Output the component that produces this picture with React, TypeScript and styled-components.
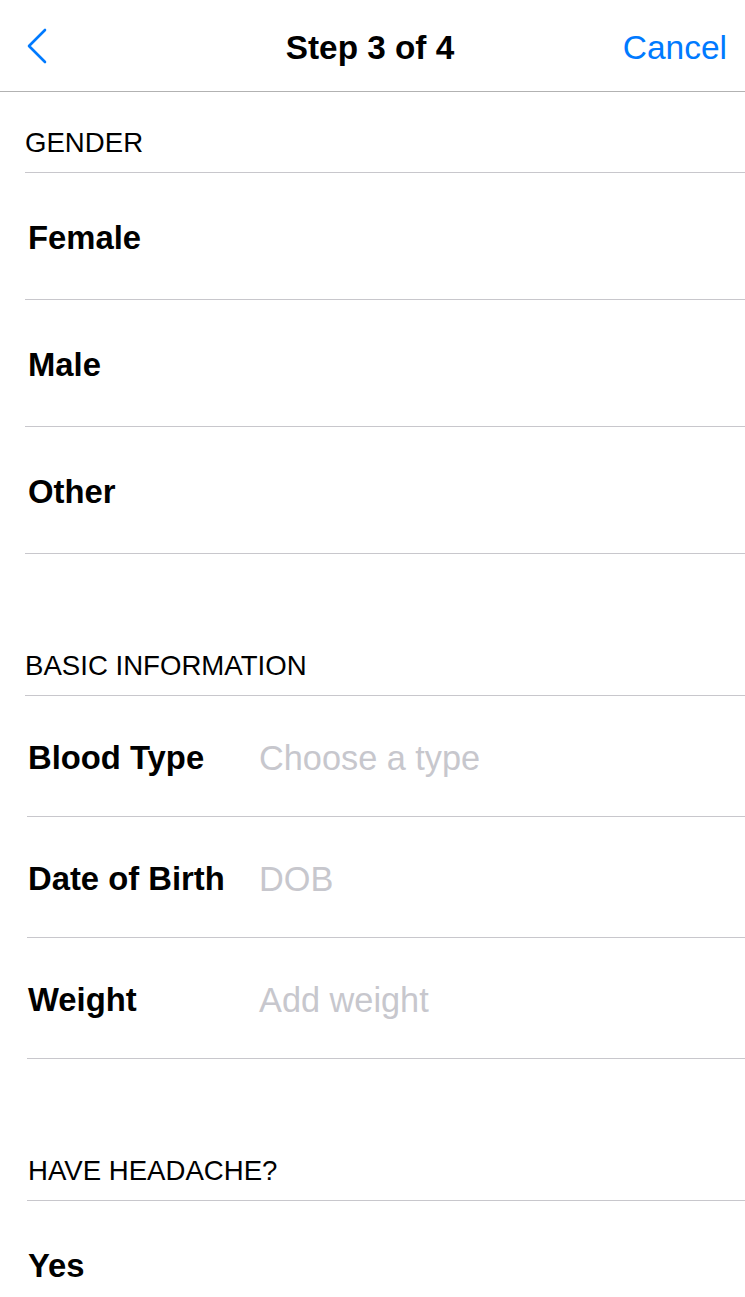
import styled, { createGlobalStyle } from 'styled-components'

const GlobalStyle = createGlobalStyle`
  html, body {
    margin: 0;
    padding: 0;
    background: #ffffff;
  }
  body {
    font-family: 'Liberation Sans', Arial, Helvetica, sans-serif;
    color: #000000;
    -webkit-font-smoothing: antialiased;
  }
`

const Root = styled.div`
  width: 745px;
  height: 1297px;
  overflow: hidden;
  background: #ffffff;
`

const NavBar = styled.div`
  height: 91px;
  display: grid;
  grid-template-columns: 140px 1fr 140px;
  align-items: center;
  border-bottom: 1px solid #b2b2b2;
  box-sizing: content-box;
`

const BackButton = styled.button`
  display: flex;
  align-items: center;
  justify-self: start;
  margin-left: 26px;
  margin-top: 2px;
  padding: 0;
  border: none;
  background: none;
  cursor: pointer;
`

const Title = styled.div`
  text-align: center;
  padding: 5px 5px 0 0;
  font-size: 33.3px;
  font-weight: 700;
`

const CancelButton = styled.button`
  justify-self: end;
  margin-right: 18px;
  padding: 4px 0 0;
  border: none;
  background: none;
  font-family: inherit;
  font-size: 33.5px;
  color: #007aff;
  cursor: pointer;
`

const Section = styled.section<{ $first?: boolean }>`
  margin-top: ${({ $first }) => ($first ? '0' : '61px')};
`

const SectionHeader = styled.div<{ $inset: number }>`
  height: 80px;
  box-sizing: border-box;
  padding: 35px 0 0 ${({ $inset }) => $inset}px;
  font-size: 27.6px;
  line-height: 32px;
  text-transform: uppercase;
  color: #000000;
`

const Row = styled.div<{ $height: number; $inset: number }>`
  height: ${({ $height }) => $height}px;
  box-sizing: border-box;
  display: flex;
  align-items: center;
  padding: 4px 0 0 28px;
  position: relative;
  border-top: 1px solid transparent;

  &::before {
    content: '';
    position: absolute;
    top: -1px;
    left: ${({ $inset }) => $inset}px;
    right: 0;
    height: 1px;
    background: #c8c7cc;
  }
`

const SectionEnd = styled.div<{ $inset: number }>`
  height: 1px;
  margin-left: ${({ $inset }) => $inset}px;
  background: #c8c7cc;
`

const Label = styled.div<{ $width?: number }>`
  width: ${({ $width }) => ($width ? `${$width}px` : 'auto')};
  font-size: 32.8px;
  font-weight: 700;
  flex-shrink: 0;
`

const Placeholder = styled.div`
  font-size: 34.3px;
  color: #c7c7cd;
`

const Chevron = () => (
  <svg width="24" height="38" viewBox="0 0 24 38" fill="none">
    <path
      d="M19 2 L3 18 L19 34"
      stroke="#007aff"
      strokeWidth="2.6"
      strokeLinecap="round"
      strokeLinejoin="round"
    />
  </svg>
)

const genders = ['Female', 'Male', 'Other']

const basicInfo = [
  { label: 'Blood Type', placeholder: 'Choose a type' },
  { label: 'Date of Birth', placeholder: 'DOB' },
  { label: 'Weight', placeholder: 'Add weight' },
]

const App = () => {
  return (
    <Root>
      <GlobalStyle />
      <NavBar>
        <BackButton aria-label="Back">
          <Chevron />
        </BackButton>
        <Title>Step 3 of 4</Title>
        <CancelButton>Cancel</CancelButton>
      </NavBar>

      <Section $first>
        <SectionHeader $inset={25}>Gender</SectionHeader>
        {genders.map((g) => (
          <Row key={g} $height={127} $inset={25}>
            <Label>{g}</Label>
          </Row>
        ))}
        <SectionEnd $inset={25} />
      </Section>

      <Section>
        <SectionHeader $inset={25}>Basic Information</SectionHeader>
        {basicInfo.map((item) => (
          <Row key={item.label} $height={121} $inset={item.label === 'Blood Type' ? 25 : 27}>
            <Label $width={231}>{item.label}</Label>
            <Placeholder>{item.placeholder}</Placeholder>
          </Row>
        ))}
        <SectionEnd $inset={27} />
      </Section>

      <Section>
        <SectionHeader $inset={28}>Have Headache?</SectionHeader>
        <Row $height={127} $inset={27}>
          <Label>Yes</Label>
        </Row>
      </Section>
    </Root>
  )
}

export default App
